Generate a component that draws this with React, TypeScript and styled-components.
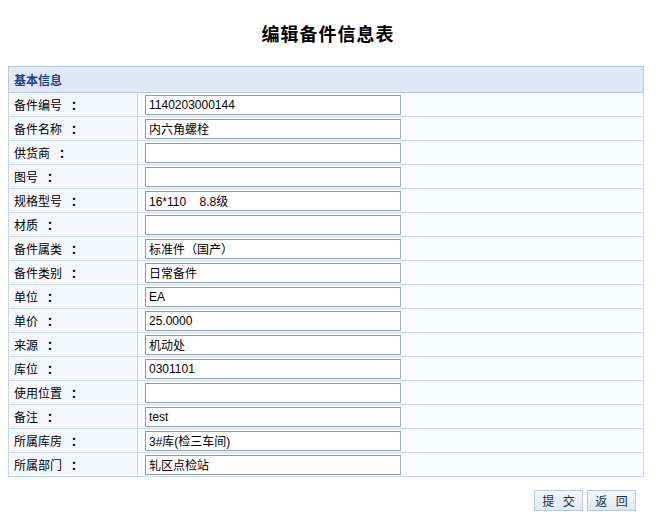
import React from "react";
import styled, { createGlobalStyle } from "styled-components";

const Global = createGlobalStyle`
  html, body { margin: 0; padding: 0; background: #ffffff; }
  body { font-family: "Liberation Sans", "Noto Sans CJK SC", sans-serif; font-size: 12px; color: #000; }
`;

const Page = styled.div`
  padding: 22px 16px 0 8px;
  width: 636px;
`;

const Title = styled.h1`
  margin: 0 0 22px 0;
  height: 22px;
  line-height: 22px;
  text-align: center;
  font-family: "Noto Sans CJK SC", sans-serif;
  font-size: 18px;
  letter-spacing: 1px;
  font-weight: bold;
  color: #000;
  padding-left: 4px;
`;

const Table = styled.table`
  width: 636px;
  border-collapse: collapse;
  border: 1px solid #b4c9de;
`;

const HeadCell = styled.th`
  height: 25px;
  padding: 0 0 0 5px;
  text-align: left;
  background: #dfe8f6;
  border: 1px solid #b4c9de;
  color: #15428b;
  font-family: "Noto Sans CJK SC", sans-serif;
  font-size: 12px;
  font-weight: bold;
`;

const Label = styled.td`
  width: 123px;
  height: 23px;
  padding: 0 0 0 5px;
  background: #f4f8fc;
  border: 1px solid #c6d7e8;
  font-family: "Noto Sans CJK SC", sans-serif;
  font-size: 12px;
  color: #000;
  white-space: nowrap;
`;

const Colon = styled.span`
  margin-left: 9px;
  font-weight: bold;
`;

const Value = styled.td`
  height: 23px;
  padding: 0 0 0 7px;
  background: #fafcff;
  border: 1px solid #c6d7e8;
`;

const Field = styled.input`
  display: block;
  box-sizing: border-box;
  width: 256px;
  height: 20px;
  margin: 0;
  padding: 0 3px;
  border: 1px solid #8a9eb3;
  border-right-color: #9eb0c2;
  background: #ffffff;
  font-family: "Liberation Sans", "Noto Sans CJK SC", sans-serif;
  font-size: 12px;
  color: #000;
  outline: none;
`;

const Actions = styled.div`
  display: flex;
  justify-content: flex-end;
  gap: 4px;
  padding: 13px 8px 0 0;
`;

const Button = styled.button`
  width: 49px;
  height: 21px;
  padding: 0 0 0 3px;
  border: 1px solid #b7c8dc;
  background: linear-gradient(#f3f7fc, #dfe8f3);
  font-family: "Noto Sans CJK SC", sans-serif;
  font-size: 12px;
  letter-spacing: 3px;
  color: #1a2a40;
  white-space: pre;
  cursor: pointer;
`;

const rows: [string, string][] = [
  ["备件编号", "1140203000144"],
  ["备件名称", "内六角螺栓"],
  ["供货商", ""],
  ["图号", ""],
  ["规格型号", "16*110    8.8级"],
  ["材质", ""],
  ["备件属类", "标准件（国产）"],
  ["备件类别", "日常备件"],
  ["单位", "EA"],
  ["单价", "25.0000"],
  ["来源", "机动处"],
  ["库位", "0301101"],
  ["使用位置", ""],
  ["备注", "test"],
  ["所属库房", "3#库(检三车间)"],
  ["所属部门", "轧区点检站"],
];

export default function App() {
  return (
    <>
      <Global />
      <Page>
        <Title>编辑备件信息表</Title>
        <Table>
          <thead>
            <tr>
              <HeadCell colSpan={2}>基本信息</HeadCell>
            </tr>
          </thead>
          <tbody>
            {rows.map(([label, value]) => (
              <tr key={label}>
                <Label>
                  {label}
                  <Colon>：</Colon>
                </Label>
                <Value>
                  <Field defaultValue={value} />
                </Value>
              </tr>
            ))}
          </tbody>
        </Table>
        <Actions>
          <Button>{"提 交"}</Button>
          <Button>{"返 回"}</Button>
        </Actions>
      </Page>
    </>
  );
}
